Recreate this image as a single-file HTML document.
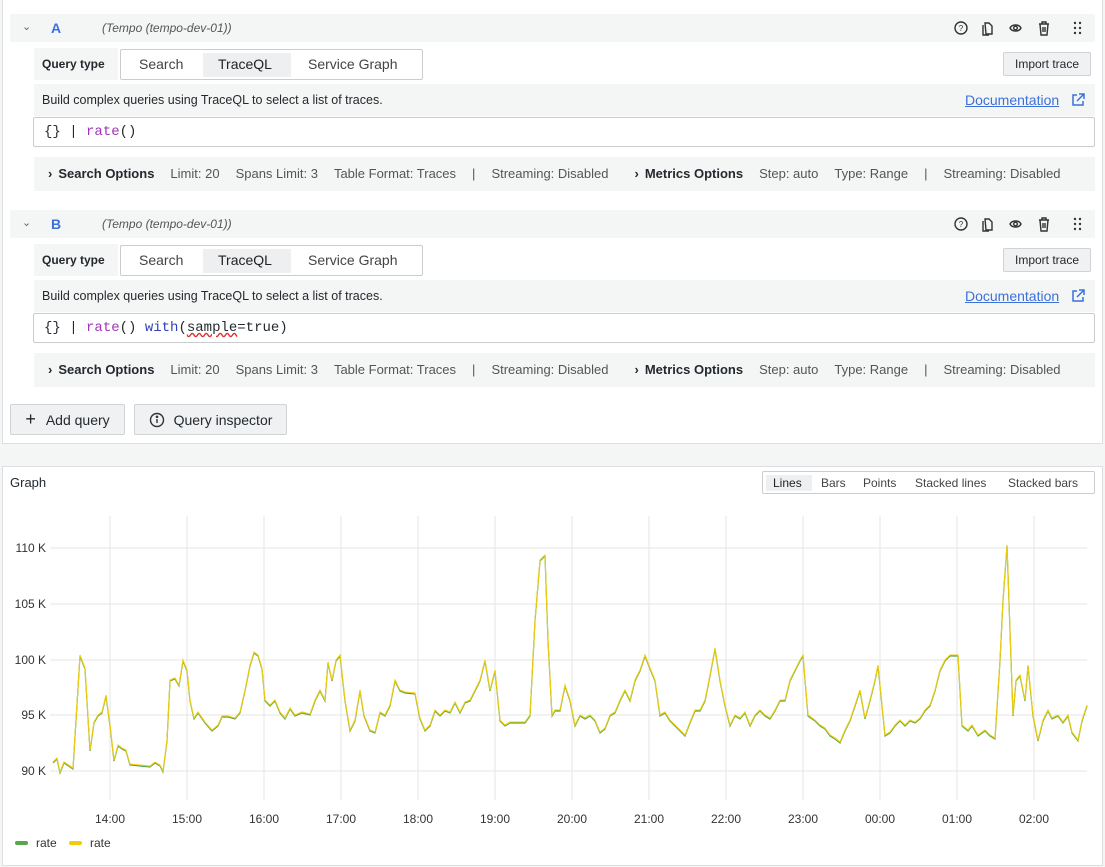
<!DOCTYPE html>
<html><head><style>
*{box-sizing:border-box;margin:0;padding:0}
body{width:1105px;height:867px;background:#f4f5f5;font-family:"Liberation Sans",sans-serif;color:#24292e;position:relative;overflow:hidden;font-size:12px}
.abs{position:absolute}
.panel{position:absolute;background:#fff;border:1px solid #dcdee1}
.grey{background:#f4f5f5}
.hdr{position:absolute;left:10px;width:1085px;height:28px;background:#f4f5f5}
.btn{position:absolute;background:#f0f1f2;border:1px solid #d0d2d5;border-radius:2px;font-size:13px;display:flex;align-items:center;justify-content:center}
.mono{font-family:"Liberation Mono",monospace;font-size:14px}
.opt span{margin-right:16px;color:#555}
.opt b{color:#24292e;margin-right:16px}
</style></head><body>
<div class="panel" style="left:2px;top:-1px;width:1101px;height:445px"></div>

<!-- A -->
<div class="hdr" style="top:14px"></div>
<div class="abs" style="left:22px;top:20px;font-size:11px;color:#666">⌄</div>
<div class="abs" style="left:51px;top:20px;font-size:14px;font-weight:bold;color:#3d71d9">A</div>
<div class="abs" style="left:102px;top:21px;font-size:12px;font-style:italic;color:#555">(Tempo (tempo-dev-01))</div>
<svg class="abs" style="left:950px;top:18px" width="140" height="20" viewBox="0 0 140 20" fill="none" stroke="#333" stroke-width="1.4">
<circle cx="11" cy="10" r="6"/><text x="11" y="13" font-size="8" text-anchor="middle" fill="#333" stroke="none">?</text>
<path d="M35 5h4l3 3v8h-6z M33 7v10h6"/>
<path d="M60 10c2-4 9-4 11 0c-2 4-9 4-11 0z"/><circle cx="65.5" cy="10" r="1.8"/>
<path d="M89 6h10M92 6v-2h4v2M90 6l1 11h6l1-11M93 9v5M95 9v5"/>
<g fill="#333" stroke="none"><circle cx="125" cy="5" r="1.2"/><circle cx="130" cy="5" r="1.2"/><circle cx="125" cy="10" r="1.2"/><circle cx="130" cy="10" r="1.2"/><circle cx="125" cy="15" r="1.2"/><circle cx="130" cy="15" r="1.2"/></g>
</svg>
<div class="abs grey" style="left:34px;top:48px;width:84px;height:32px;font-size:12px;font-weight:bold;line-height:32px;padding-left:8px">Query type</div>
<div class="abs" style="left:120px;top:49px;width:303px;height:31px;border:1px solid #ccc;border-radius:2px;font-size:14px;color:#444">
 <span class="abs" style="left:18px;top:6px">Search</span>
 <span class="abs" style="left:82px;top:3px;width:88px;height:24px;background:#eeeff0"></span>
 <span class="abs" style="left:97px;top:6px;color:#222">TraceQL</span>
 <span class="abs" style="left:187px;top:6px">Service Graph</span>
</div>
<div class="btn" style="left:1003px;top:52px;width:88px;height:24px;font-size:12px">Import trace</div>
<div class="abs grey" style="left:34px;top:84px;width:1061px;height:32px"></div>
<div class="abs" style="left:42px;top:93px;font-size:12.5px">Build complex queries using TraceQL to select a list of traces.</div>
<div class="abs" style="left:965px;top:92px;font-size:14px;color:#3d71d9;text-decoration:underline">Documentation</div>
<svg class="abs" style="left:1071px;top:93px" width="14" height="14" fill="none" stroke="#3d71d9" stroke-width="1.5"><path d="M6 2H2v10h10V8M8 1h5v5M13 1L6 8"/></svg>
<div class="abs mono" style="left:33px;top:117px;width:1062px;height:30px;border:1px solid #ccc;border-radius:2px;padding:6px 10px">{} | <span style="color:#a035b8">rate</span>()</div>
<div class="abs grey opt" style="left:34px;top:157px;width:1061px;height:34px;padding:9px 0 0 14px;font-size:13px;white-space:nowrap">
<b>›</b><b style="margin-left:-10px">Search Options</b><span>Limit: 20</span><span>Spans Limit: 3</span><span>Table Format: Traces</span><span>|</span><span>Streaming: Disabled</span><b style="margin-left:10px">›</b><b style="margin-left:-10px">Metrics Options</b><span>Step: auto</span><span>Type: Range</span><span>|</span><span>Streaming: Disabled</span></div>

<!-- B -->
<div class="hdr" style="top:210px"></div>
<div class="abs" style="left:22px;top:216px;font-size:11px;color:#666">⌄</div>
<div class="abs" style="left:51px;top:216px;font-size:14px;font-weight:bold;color:#3d71d9">B</div>
<div class="abs" style="left:102px;top:217px;font-size:12px;font-style:italic;color:#555">(Tempo (tempo-dev-01))</div>
<svg class="abs" style="left:950px;top:214px" width="140" height="20" viewBox="0 0 140 20" fill="none" stroke="#333" stroke-width="1.4">
<circle cx="11" cy="10" r="6"/><text x="11" y="13" font-size="8" text-anchor="middle" fill="#333" stroke="none">?</text>
<path d="M35 5h4l3 3v8h-6z M33 7v10h6"/>
<path d="M60 10c2-4 9-4 11 0c-2 4-9 4-11 0z"/><circle cx="65.5" cy="10" r="1.8"/>
<path d="M89 6h10M92 6v-2h4v2M90 6l1 11h6l1-11M93 9v5M95 9v5"/>
<g fill="#333" stroke="none"><circle cx="125" cy="5" r="1.2"/><circle cx="130" cy="5" r="1.2"/><circle cx="125" cy="10" r="1.2"/><circle cx="130" cy="10" r="1.2"/><circle cx="125" cy="15" r="1.2"/><circle cx="130" cy="15" r="1.2"/></g>
</svg>
<div class="abs grey" style="left:34px;top:244px;width:84px;height:32px;font-size:12px;font-weight:bold;line-height:32px;padding-left:8px">Query type</div>
<div class="abs" style="left:120px;top:245px;width:303px;height:31px;border:1px solid #ccc;border-radius:2px;font-size:14px;color:#444">
 <span class="abs" style="left:18px;top:6px">Search</span>
 <span class="abs" style="left:82px;top:3px;width:88px;height:24px;background:#eeeff0"></span>
 <span class="abs" style="left:97px;top:6px;color:#222">TraceQL</span>
 <span class="abs" style="left:187px;top:6px">Service Graph</span>
</div>
<div class="btn" style="left:1003px;top:248px;width:88px;height:24px;font-size:12px">Import trace</div>
<div class="abs grey" style="left:34px;top:280px;width:1061px;height:32px"></div>
<div class="abs" style="left:42px;top:289px;font-size:12.5px">Build complex queries using TraceQL to select a list of traces.</div>
<div class="abs" style="left:965px;top:288px;font-size:14px;color:#3d71d9;text-decoration:underline">Documentation</div>
<svg class="abs" style="left:1071px;top:289px" width="14" height="14" fill="none" stroke="#3d71d9" stroke-width="1.5"><path d="M6 2H2v10h10V8M8 1h5v5M13 1L6 8"/></svg>
<div class="abs mono" style="left:33px;top:313px;width:1062px;height:30px;border:1px solid #ccc;border-radius:2px;padding:6px 10px">{} | <span style="color:#a035b8">rate</span>() <span style="color:#2f43b8">with</span>(<span style="text-decoration:underline wavy #d33">sample</span>=true)</div>
<div class="abs grey opt" style="left:34px;top:353px;width:1061px;height:34px;padding:9px 0 0 14px;font-size:13px;white-space:nowrap">
<b>›</b><b style="margin-left:-10px">Search Options</b><span>Limit: 20</span><span>Spans Limit: 3</span><span>Table Format: Traces</span><span>|</span><span>Streaming: Disabled</span><b style="margin-left:10px">›</b><b style="margin-left:-10px">Metrics Options</b><span>Step: auto</span><span>Type: Range</span><span>|</span><span>Streaming: Disabled</span></div>

<div class="btn" style="left:10px;top:404px;width:115px;height:31px;font-size:14px"><span style="font-size:18px;margin-right:10px">+</span>Add query</div>
<div class="btn" style="left:134px;top:404px;width:153px;height:31px;font-size:14px"><svg width="16" height="16" style="margin-right:9px" fill="none" stroke="#333" stroke-width="1.4"><circle cx="8" cy="8" r="6.5"/><path d="M8 7v4"/><circle cx="8" cy="4.8" r=".6" fill="#333"/></svg>Query inspector</div>

<!-- Graph panel -->
<div class="panel" style="left:2px;top:466px;width:1101px;height:400px"></div>
<div class="abs" style="left:10px;top:475px;font-size:13px">Graph</div>
<div class="abs" style="left:762px;top:471px;width:333px;height:23px;border:1px solid #ccc;border-radius:2px;font-size:12px;color:#444">
<span class="abs" style="left:3px;top:3px;width:46px;height:16px;background:#eeeff0"></span>
<span class="abs" style="left:10px;top:4px;color:#222">Lines</span>
<span class="abs" style="left:58px;top:4px">Bars</span>
<span class="abs" style="left:100px;top:4px">Points</span>
<span class="abs" style="left:152px;top:4px">Stacked lines</span>
<span class="abs" style="left:245px;top:4px">Stacked bars</span>
</div>
<svg class="abs" style="left:0;top:0" width="1105" height="867">
<defs>
<polyline id="ln" fill="none" points="53,762 57,758 60,772 64,762 70,766 73,768 80,655 85,668 90,750 94,722 98,715 102,712 106,695 110,725 114,760 118,745 122,748 126,750 130,764 140,765 150,766 155,762 160,765 163,771 167,740 170,680 175,678 179,685 183,660 187,670 190,700 194,718 198,712 205,722 212,730 218,725 222,716 228,716 235,718 240,712 245,690 250,665 254,652 258,655 262,668 265,700 270,705 275,700 280,712 285,718 290,708 295,715 302,712 310,714 315,700 320,690 325,700 328,662 332,680 336,660 340,655 345,700 350,730 355,720 360,690 364,715 370,730 375,732 380,712 385,715 390,705 395,680 400,690 405,692 415,693 420,718 425,730 430,725 435,710 440,715 445,710 450,712 455,702 460,712 465,702 470,700 475,690 480,680 485,660 490,690 495,670 500,720 505,725 510,722 515,722 525,722 530,715 535,620 540,560 545,555 548,640 552,715 555,710 560,710 565,685 570,700 575,725 580,715 585,718 590,715 595,720 600,732 605,728 610,715 615,712 620,700 625,690 630,700 635,680 640,670 645,655 650,668 655,680 660,715 665,712 670,720 675,725 680,730 685,735 690,722 695,710 700,710 705,700 710,675 715,648 720,680 725,705 730,725 735,715 740,718 745,712 750,725 755,715 760,710 765,715 770,718 775,710 780,700 785,700 790,680 795,670 800,660 803,655 808,715 815,720 820,725 825,728 830,735 835,738 840,742 845,730 850,720 855,705 860,690 865,718 870,700 875,680 878,665 882,705 885,735 890,732 895,725 900,720 905,725 910,720 915,722 920,718 925,710 930,705 935,690 940,670 945,660 950,655 955,655 958,655 962,725 968,730 972,725 978,735 985,730 990,735 995,738 1000,660 1003,600 1007,545 1010,630 1013,715 1016,680 1020,675 1025,700 1028,665 1033,715 1038,740 1043,720 1048,710 1052,718 1058,715 1063,722 1068,715 1072,732 1078,740 1082,720 1087,705"/>
</defs>
<g stroke="#e6e6e6" stroke-width="1">
<path d="M50 548H1087M50 604H1087M50 660H1087M50 715H1087M50 771H1087"/>
<path d="M110 516V800M187 516V800M264 516V800M341 516V800M418 516V800M495 516V800M572 516V800M649 516V800M726 516V800M803 516V800M880 516V800M957 516V800M1034 516V800"/>
</g>
<g font-family="Liberation Sans" font-size="12" fill="#333" text-anchor="end">
<text x="46" y="552">110 K</text><text x="46" y="608">105 K</text><text x="46" y="664">100 K</text><text x="46" y="719">95 K</text><text x="46" y="775">90 K</text>
</g>
<g font-family="Liberation Sans" font-size="12" fill="#333" text-anchor="middle">
<text x="110" y="823">14:00</text><text x="187" y="823">15:00</text><text x="264" y="823">16:00</text><text x="341" y="823">17:00</text><text x="418" y="823">18:00</text><text x="495" y="823">19:00</text><text x="572" y="823">20:00</text><text x="649" y="823">21:00</text><text x="726" y="823">22:00</text><text x="803" y="823">23:00</text><text x="880" y="823">00:00</text><text x="957" y="823">01:00</text><text x="1034" y="823">02:00</text>
</g>
<use href="#ln" stroke="#56a64b" stroke-width="1.2" transform="translate(0,1)"/>
<use href="#ln" stroke="#f2cc0c" stroke-width="1.1"/>
<rect x="15" y="841" width="13" height="4" rx="2" fill="#56a64b"/>
<rect x="69" y="841" width="13" height="4" rx="2" fill="#f2cc0c"/>
<g font-family="Liberation Sans" font-size="12" fill="#333"><text x="36" y="847">rate</text><text x="90" y="847">rate</text></g>
</svg>
</body></html>
